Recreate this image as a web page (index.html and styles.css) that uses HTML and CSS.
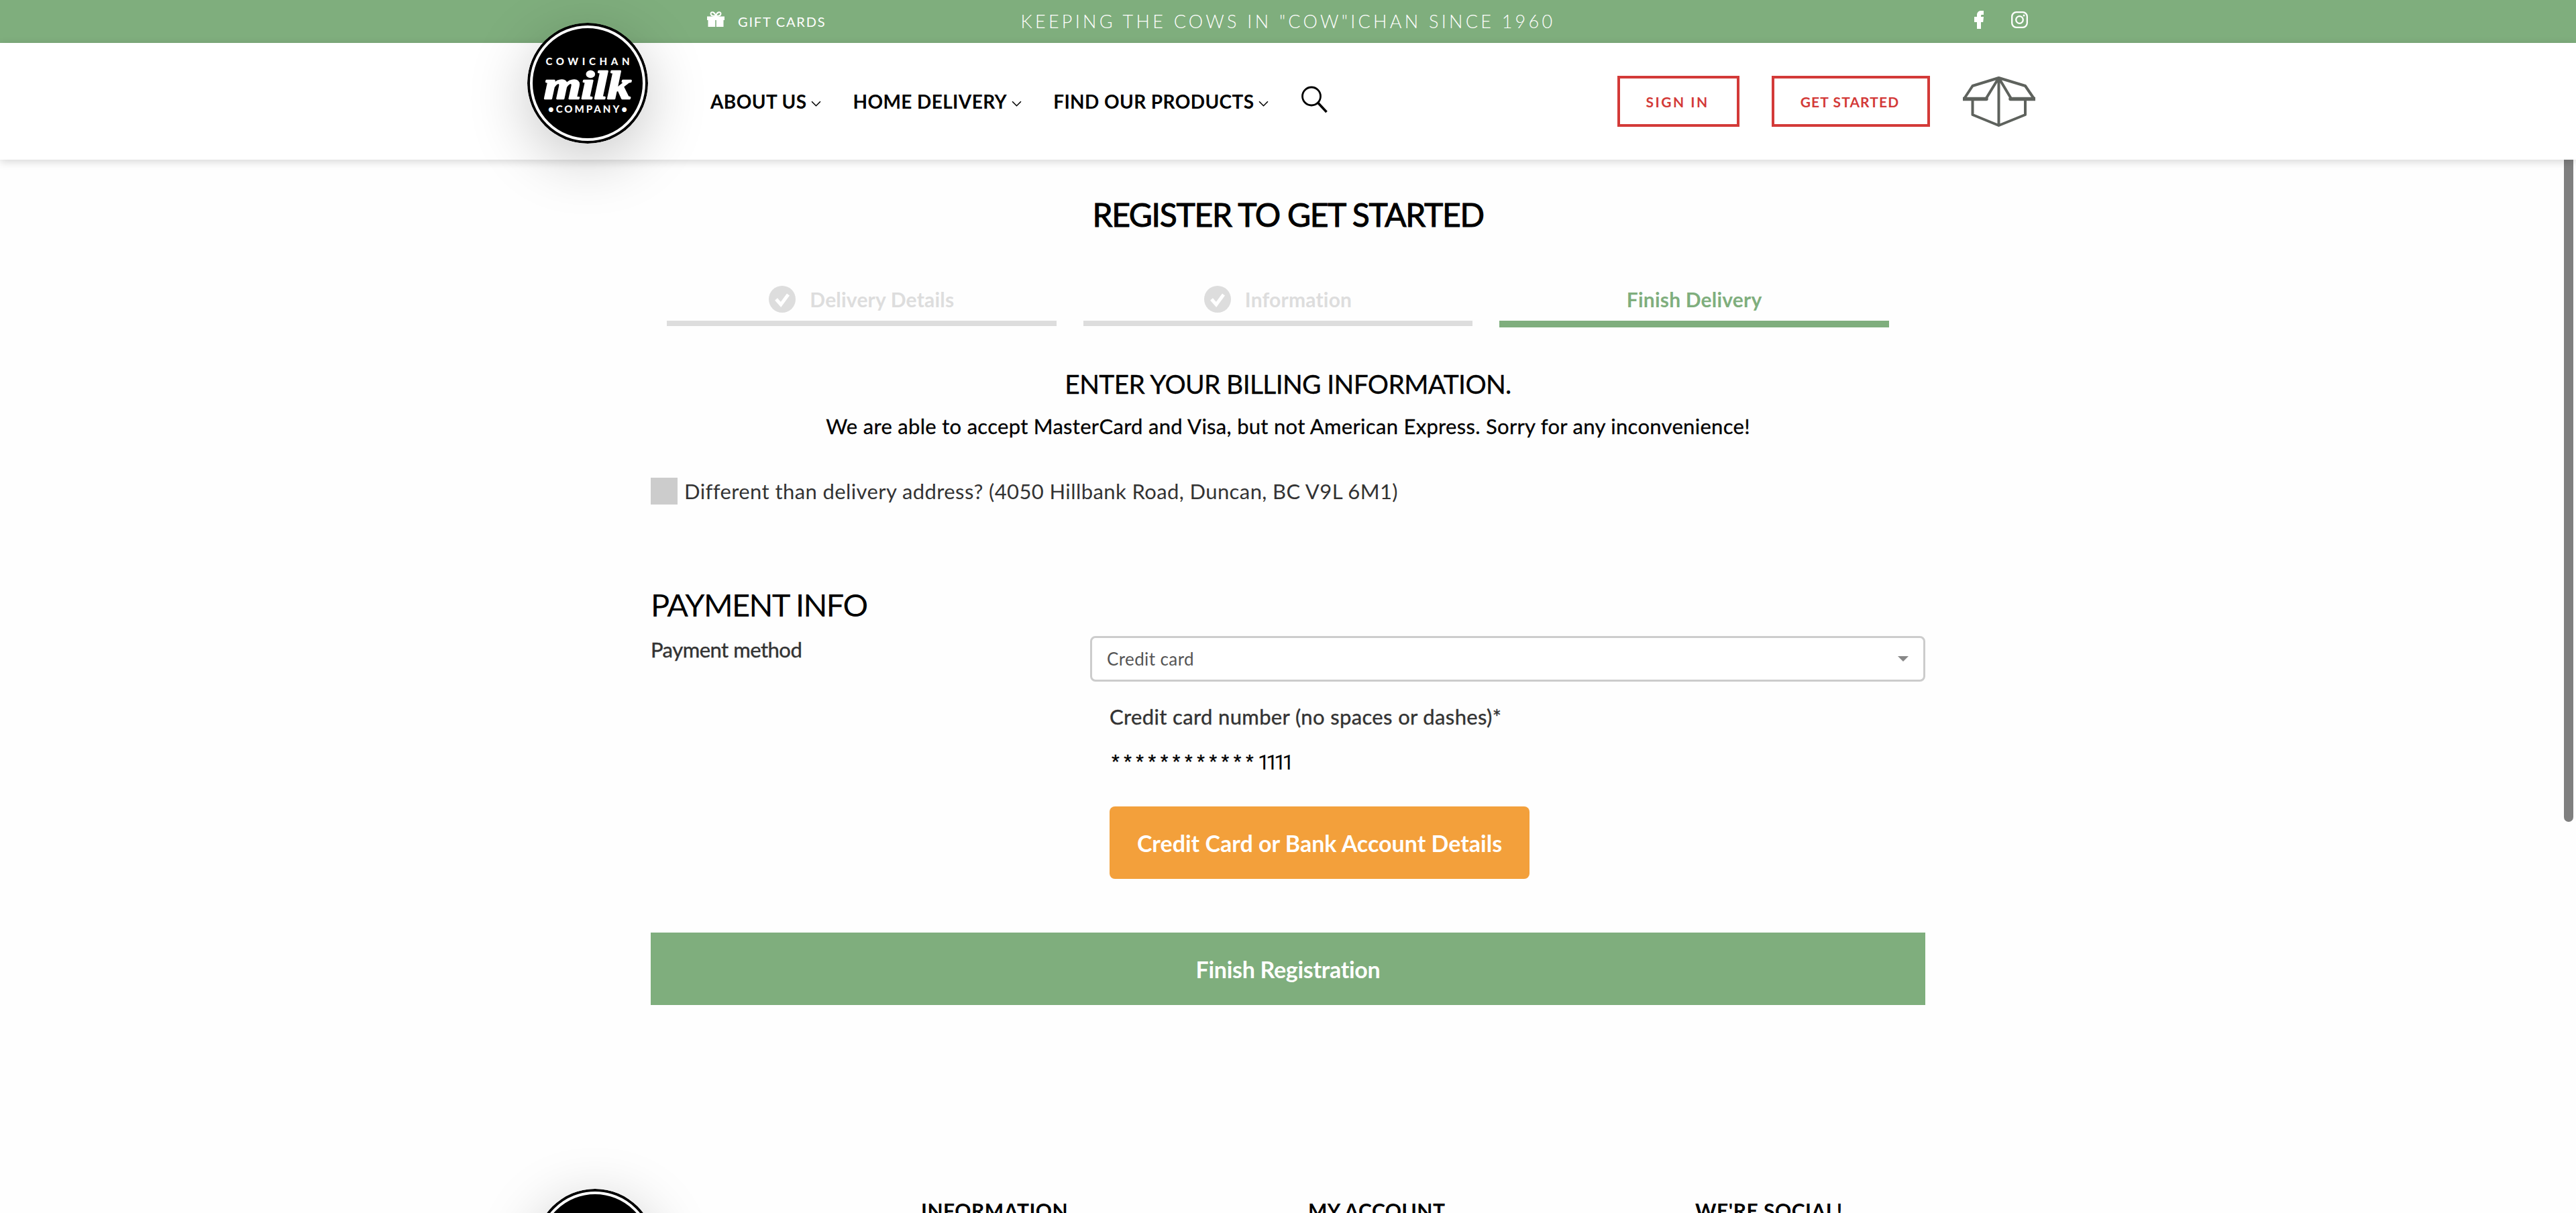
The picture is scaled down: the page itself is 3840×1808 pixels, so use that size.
FILE: index.html
```html
<!DOCTYPE html>
<html lang="en">
<head>
<meta charset="utf-8">
<title>Cowichan Milk Company - Register</title>
<link rel="stylesheet" href="styles.css">
</head>
<body>
<div class="page">
  <div class="topbar">
    <a class="gift"><svg class="gift-icon" viewBox="0 0 26 23"><path d="M0 7.500h26v5.500H24.500v10H13.800V13h-1.600v10H1.500V13H0z" fill="#fff"/><path d="M13 7C9.500 7 5.500 6.500 5.500 3.500 5.500 1.500 7.500.6 9.300 1.500 11 2.400 12.500 4.500 13 7c.5-2.500 2-4.600 3.700-5.500 1.800-.9 3.800 0 3.800 2C20.500 6.500 16.500 7 13 7z" fill="none" stroke="#fff" stroke-width="2"/></svg><span>GIFT CARDS</span></a>
    <div class="tagline">KEEPING THE COWS IN "COW"ICHAN SINCE 1960</div>
    <div class="social">
      <svg class="fb" viewBox="0 0 14 27"><path d="M4 27V17H0V9h4V6.500C4 2.500 6.500 0 10 0h4v6h-2.500C10.500 6 10 6.500 10 7.500V9h4l-.8 8H10v10z" fill="#fff"/></svg>
      <svg class="ig" viewBox="0 0 25 25"><rect x="1.200" y="1.200" width="22.600" height="22.600" rx="6.500" fill="none" stroke="#fff" stroke-width="2.300"/><circle cx="12.500" cy="12.500" r="5.300" fill="none" stroke="#fff" stroke-width="2.300"/><circle cx="19" cy="6" r="1.500" fill="#fff"/></svg>
    </div>
  </div>
  <header class="header">
    <nav class="nav">
      <a class="nav-item">ABOUT US<svg class="caret" viewBox="0 0 14 8"><path d="M1 1l6 6 6-6" fill="none" stroke="#000" stroke-width="1.500"/></svg></a>
      <a class="nav-item">HOME DELIVERY<svg class="caret" viewBox="0 0 14 8"><path d="M1 1l6 6 6-6" fill="none" stroke="#000" stroke-width="1.500"/></svg></a>
      <a class="nav-item">FIND OUR PRODUCTS<svg class="caret" viewBox="0 0 14 8"><path d="M1 1l6 6 6-6" fill="none" stroke="#000" stroke-width="1.500"/></svg></a>
      <svg class="search" viewBox="0 0 40 40"><circle cx="16" cy="15.500" r="13.500" fill="none" stroke="#000" stroke-width="2.800"/><path d="M25.500 25l13 14" stroke="#000" stroke-width="3.600" fill="none"/></svg>
    </nav>
    <div class="actions">
      <a class="outline-btn signin">SIGN IN</a>
      <a class="outline-btn started">GET STARTED</a>
      <svg class="box" viewBox="0 0 108 75"><path d="M53.500 2L14.500 14 2 33h32.500zM53.500 2L93 14l13 19H72zM14.500 33v24l39 16 39.500-16V33M53.500 2v71" fill="none" stroke="#5e625d" stroke-width="4" stroke-linejoin="round"/><path d="M1 33.500h34M71 33.500h36" stroke="#5e625d" stroke-width="5.500" stroke-linecap="round"/></svg>
    </div>
  </header>
  <svg class="logo logo-top" viewBox="0 0 180 180">
    <circle cx="90" cy="90" r="90" fill="#000"/><circle cx="90" cy="90" r="84" fill="none" stroke="#fff" stroke-width="4"/>
    <text class="logo-small" x="90" y="63" text-anchor="middle" textLength="125">COWICHAN</text>
    <text class="logo-script" x="90" y="113" text-anchor="middle" textLength="130" lengthAdjust="spacingAndGlyphs">milk</text>
    <text class="logo-small" x="90" y="134" text-anchor="middle" textLength="118">•COMPANY•</text>
  </svg>

  <main class="main">
    <h1 class="title">REGISTER TO GET STARTED</h1>
    <div class="steps">
      <div class="step done"><div class="step-label"><svg class="check" viewBox="0 0 40 40"><circle cx="20" cy="20" r="20" fill="#ddd"/><path d="M11 20l7 8 11-15" fill="none" stroke="#fff" stroke-width="5"/></svg>Delivery Details</div></div>
      <div class="step done"><div class="step-label"><svg class="check" viewBox="0 0 40 40"><circle cx="20" cy="20" r="20" fill="#ddd"/><path d="M11 20l7 8 11-15" fill="none" stroke="#fff" stroke-width="5"/></svg>Information</div></div>
      <div class="step active"><div class="step-label">Finish Delivery</div></div>
    </div>
    <h2 class="billing-title">ENTER YOUR BILLING INFORMATION.</h2>
    <p class="billing-note">We are able to accept MasterCard and Visa, but not American Express. Sorry for any inconvenience!</p>
    <label class="address"><span class="checkbox"></span>Different than delivery address? (4050 Hillbank Road, Duncan, BC V9L 6M1)</label>
    <h2 class="payment-title">PAYMENT INFO</h2>
    <div class="payment-row">
      <div class="payment-label">Payment method</div>
      <div class="payment-fields">
        <div class="select">Credit card<span class="select-arrow"></span></div>
        <div class="card-block">
          <div class="card-label">Credit card number (no spaces or dashes)*</div>
          <div class="card-number"><span class="stars">************</span><span class="last-four">1111</span></div>
          <a class="orange-btn">Credit Card or Bank Account Details</a>
        </div>
      </div>
    </div>
    <a class="finish-btn">Finish Registration</a>
  </main>

  <footer class="footer">
    <svg class="logo logo-foot" viewBox="0 0 180 180"><circle cx="90" cy="90" r="90" fill="#000"/><circle cx="90" cy="90" r="84" fill="none" stroke="#fff" stroke-width="4"/></svg>
    <div class="foot-col col-info">INFORMATION</div>
    <div class="foot-col">MY ACCOUNT</div>
    <div class="foot-col">WE'RE SOCIAL!</div>
  </footer>
  <div class="scroll-thumb"></div>
</div>
</body>
</html>
```
FILE: styles.css
```css
* { box-sizing: border-box; }
html, body { margin: 0; padding: 0; }
body { background: #fefefe; font-family: "Lato", "Liberation Sans", sans-serif; color: #000; }
.page { position: relative; width: 3840px; height: 1808px; overflow: hidden; }

.topbar { position: relative; z-index: 3; height: 64px; background: #7fae7d; color: #fff; display: grid; grid-template-columns: 1fr auto 1fr; align-items: center; }
.gift { display: flex; align-items: center; padding-left: 1054px; font-size: 20px; letter-spacing: 1.800px; }
.gift-icon { width: 26px; height: 23px; margin: -7px 20px 0 0; }
.tagline { font-size: 27px; font-weight: 300; letter-spacing: 4.270px; margin-top: -2px; }
.social { display: flex; justify-content: flex-end; align-items: center; gap: 41px; padding-right: 817px; margin-top: -6px; }
.fb { width: 14px; height: 27px; }
.ig { width: 25px; height: 25px; }

.header { position: relative; z-index: 3; height: 174px; background: #fff; box-shadow: 0 3px 12px rgba(0,0,0,.16); display: flex; align-items: center; justify-content: space-between; padding: 0 806px 0 1059px; }
.nav { display: flex; align-items: center; }
.nav-item { display: flex; align-items: center; font-size: 28px; font-weight: 700; letter-spacing: .4px; margin-right: 47px; }
.caret { width: 15px; height: 9px; margin-left: 7px; margin-top: 6px; }
.search { width: 40px; height: 40px; margin: -6px 0 0 1px; }
.actions { display: flex; align-items: center; }
.outline-btn { display: flex; align-items: center; justify-content: center; height: 76px; border: 4px solid #d33a38; color: #d33a38; font-size: 21px; font-weight: 700; padding-top: 1px; }
.signin { width: 182px; margin-right: 48px; letter-spacing: 2.500px; padding-right: 3px; }
.started { width: 236px; margin-right: 49px; letter-spacing: 1.100px; padding-right: 3px; }
.box { width: 108px; height: 75px; }

.logo { position: absolute; width: 180px; height: 180px; border-radius: 50%; box-shadow: 0 22px 90px rgba(0,0,0,.22); }
.logo-top { z-index: 4; left: 786px; top: 34px; }
.logo-small { font-family: "Lato", sans-serif; font-weight: 900; font-size: 15px; fill: #fff; }
.logo-script { font-family: "Liberation Serif", serif; font-style: italic; font-weight: 700; font-size: 60px; fill: #fff; stroke: #fff; stroke-width: 2.500px; stroke-linejoin: round; }

.main { width: 1900px; margin: 0 auto; }
.title { margin: 52px 0 0; font-size: 48px; line-height: 60px; font-weight: 400; text-align: center; letter-spacing: -1.300px; -webkit-text-stroke: 1px #000; }
.steps { display: flex; gap: 40px; padding: 0 54px 0 24px; margin-top: 76px; align-items: flex-start; }
.step { flex: 1; border-bottom: 8px solid #ddd; height: 60px; color: #ddd; }
.step.active { border-bottom: 10px solid #7fae7d; height: 62px; color: #7fae7d; }
.step-label { display: flex; justify-content: center; align-items: center; height: 40px; font-size: 30px; font-weight: 700; letter-spacing: .2px; }
.check { width: 40px; height: 40px; margin-right: 21px; }
.billing-title { margin: 59px 0 0; font-size: 39px; line-height: 50px; font-weight: 400; text-align: center; letter-spacing: -.65px; -webkit-text-stroke: .3px #000; }
.billing-note { margin: 18px 0 0; font-size: 31px; line-height: 40px; text-align: center; letter-spacing: .3px; -webkit-text-stroke: .3px #000; }
.address { display: flex; align-items: center; margin-top: 57px; font-size: 31px; color: #333; letter-spacing: .4px; }
.checkbox { width: 40px; height: 40px; background: #ccc; margin-right: 10px; }
.payment-title { margin: 119px 0 0; font-size: 47px; line-height: 60px; font-weight: 400; letter-spacing: -1.600px; }
.payment-row { display: flex; margin-top: 17px; }
.payment-label { width: 655px; font-size: 31px; line-height: 40px; color: #333; letter-spacing: -.5px; -webkit-text-stroke: .4px #333; }
.payment-fields { flex: 1; }
.select { position: relative; height: 68px; border: 3px solid #ccc; border-radius: 8px; background: #fff; display: flex; align-items: center; padding-left: 22px; font-size: 26px; color: #555; letter-spacing: .4px; }
.select-arrow { position: absolute; right: 22px; top: 27px; border-left: 8px solid transparent; border-right: 8px solid transparent; border-top: 8px solid #888; }
.card-block { padding-left: 29px; }
.card-label { margin-top: 32px; font-size: 31px; line-height: 40px; color: #333; letter-spacing: .36px; -webkit-text-stroke: .4px #333; }
.card-number { margin-top: 27px; height: 40px; display: flex; align-items: flex-start; padding-left: 3px; }
.stars { font-family: "Liberation Sans", sans-serif; font-size: 30px; line-height: 40px; letter-spacing: 6.500px; -webkit-text-stroke: .4px #000; }
.last-four { font-family: "Roboto", sans-serif; font-size: 31px; line-height: 44px; letter-spacing: -5.300px; }
.orange-btn { display: flex; align-items: center; justify-content: center; width: 626px; height: 108px; margin-top: 47px; background: #f3a03b; color: #fff; border-radius: 8px; font-size: 34px; font-weight: 700; }
.finish-btn { display: flex; align-items: center; justify-content: center; height: 108px; margin-top: 80px; background: #7fae7d; color: #fff; font-size: 34px; font-weight: 700; letter-spacing: -.3px; }

.footer { display: flex; align-items: flex-start; padding-left: 797px; margin-top: 274px; }
.logo-foot { position: static; flex: none; margin-right: 396px; }
.foot-col { width: 577px; flex: none; margin-top: 14px; font-size: 30px; line-height: 36px; font-weight: 700; letter-spacing: .5px; }
.scroll-thumb { position: absolute; z-index: 1; top: 100px; left: 3822px; width: 14px; height: 1125px; border-radius: 7px; background: #7f7f7f; }
```
